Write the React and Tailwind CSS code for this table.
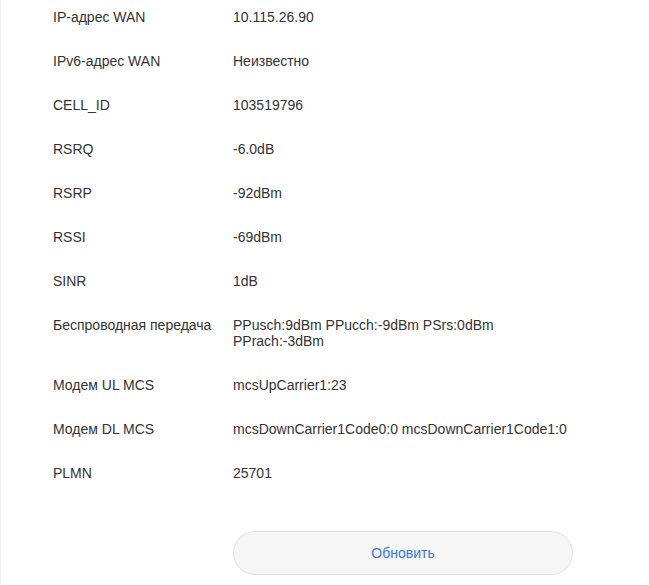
import React from "react";

const rows = [
  ["IP-адрес WAN", "10.115.26.90"],
  ["IPv6-адрес WAN", "Неизвестно"],
  ["CELL_ID", "103519796"],
  ["RSRQ", "-6.0dB"],
  ["RSRP", "-92dBm"],
  ["RSSI", "-69dBm"],
  ["SINR", "1dB"],
  ["Беспроводная передача", "PPusch:9dBm PPucch:-9dBm PSrs:0dBm PPrach:-3dBm"],
  ["Модем UL MCS", "mcsUpCarrier1:23"],
  ["Модем DL MCS", "mcsDownCarrier1Code0:0 mcsDownCarrier1Code1:0"],
  ["PLMN", "25701"],
];

export default function App() {
  return (
    <div
      className="w-[649px] h-[585px] overflow-hidden bg-white border-l border-[#f2f2f2] text-[14px] leading-[16px] text-[#333333]"
      style={{ fontFamily: '"Liberation Sans", Arial, sans-serif' }}
    >
      <div className="pt-[9px] pl-[52px] flex flex-col">
        {rows.map(([k, v]) => (
          <div key={k} className="flex pb-[28px]">
            <div className="w-[180px] shrink-0">{k}</div>
            <div className="w-[340px]">{v}</div>
          </div>
        ))}
        <div className="flex pt-[22px]">
          <div className="w-[180px] shrink-0" />
          <button className="w-[340px] h-[44px] rounded-full border border-[#e3e3e3] bg-[#f6f6f6] text-[#3476df] text-[14px]">
            Обновить
          </button>
        </div>
      </div>
    </div>
  );
}
